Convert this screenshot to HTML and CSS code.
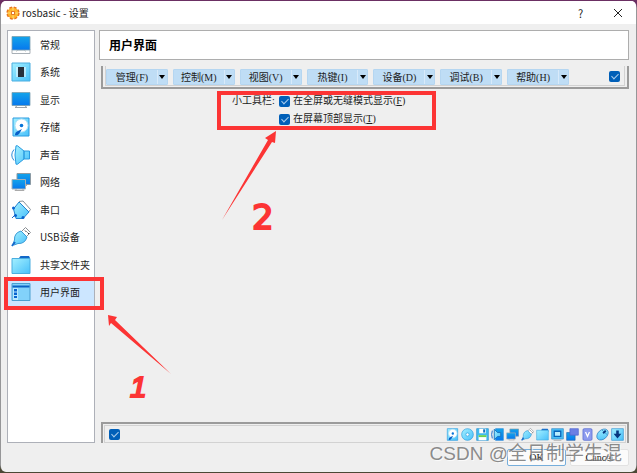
FILE: index.html
```html
<!DOCTYPE html>
<html lang="zh-CN">
<head>
    <meta charset="UTF-8">
    <meta name="viewport" content="width=device-width, initial-scale=1.0">
    <title>rosbasic - 设置</title>
    <link rel="stylesheet" href="styles.css">
</head>
<body>
    <!-- Shared icons -->
    <svg class="icon-defs" aria-hidden="true">
        <defs>
            <linearGradient id="blue" x1="0" y1="0" x2="0" y2="1">
                <stop offset="0" stop-color="#14a4ea"/>
                <stop offset="1" stop-color="#0678ee"/>
            </linearGradient>
            <linearGradient id="cyan" x1="0" y1="0" x2="1" y2="1">
                <stop offset="0" stop-color="#a4f0ff"/>
                <stop offset="1" stop-color="#48c0fa"/>
            </linearGradient>
            <symbol id="i-general" viewBox="0 0 20 20">
                <path d="M1 14.500h18v4H1z" fill="#fff" stroke="#a9b0b6"/>
                <path d="M5 16.500l2-1.500h6l2 1.500" fill="#fff" stroke="#ccc"/>
                <path d="M1 1.500h18V15H1z" fill="url(#blue)" stroke="#7c9fae" stroke-width=".8"/>
            </symbol>
            <symbol id="i-system" viewBox="0 0 20 20">
                <path d="M1 1h18v18H1z" fill="url(#cyan)" stroke="#4aaee0"/>
                <path d="M5 6h2M5 8h2M5 10h2M5 12h2M5 14h2M13 6h2M13 8h2M13 10h2M13 12h2M13 14h2" stroke="#fff"/>
                <path d="M7 5h6v10H7z" fill="#27303c"/>
            </symbol>
            <symbol id="i-display" viewBox="0 0 20 20">
                <path d="M4 17.500l3-2.500h6l3 2.500z" fill="#fff" stroke="#9ba3aa"/>
                <path d="M1 2.500h18v13H1z" fill="url(#blue)" stroke="#7c9fae" stroke-width=".8"/>
            </symbol>
            <symbol id="i-storage" viewBox="0 0 20 20">
                <path d="M2 1h16v18H2z" fill="url(#cyan)" stroke="#2b9be0"/>
                <circle cx="10.500" cy="8.500" r="6.500" fill="#fff" stroke="#b4e3f8"/>
                <circle cx="10.500" cy="8.500" r="1.800" fill="#0874d8"/>
                <path d="M11 12l-3 5q-2 2-4 1 0-3 3-4z" fill="#075fc8"/>
            </symbol>
            <symbol id="i-audio" viewBox="0 0 20 20">
                <path d="M3 4.500q-4.500 5.500 0 11" fill="none" stroke="#2b8bd8"/>
                <path d="M5 .8h1.500L13 6v8l-6.500 5.200H5q-2-9.200 0-18.400zM13 6h5.500v8H13z" fill="url(#cyan)" stroke="#2b9be0"/>
            </symbol>
            <symbol id="i-sound" viewBox="0 0 20 20">
                <path d="M7 1h12v18H7z" fill="url(#blue)" stroke="#2b8bd8"/>
                <path d="M2 4q-2 6 0 12" fill="none" stroke="#1669cc" stroke-width="1.500"/>
                <path d="M5 2l5 5h5v6h-5l-5 5z" fill="url(#cyan)" stroke="#1c73bd" stroke-width="1.500"/>
            </symbol>
            <symbol id="i-network" viewBox="0 0 20 20">
                <path d="M10 13.500h6" stroke="#aaa"/>
                <path d="M6 1.500h13.500v11H6z" fill="url(#blue)" stroke="#8c9aa3"/>
                <path d="M4 18.500h9l-2-2H6z" fill="#fff" stroke="#aaa"/>
                <path d="M1 7.500h13.500v9.500H1z" fill="url(#blue)" stroke="#a6b2b8"/>
            </symbol>
            <symbol id="i-serial" viewBox="0 0 20 20">
                <path d="M8 1.500l4-.5 7.500 8.500-3 4" fill="#fff" stroke="#8a929a"/>
                <path d="M8 2l10 10-6 6.500H5L2.500 9z" fill="url(#cyan)" stroke="#2583cf"/>
                <path d="M10 4l8 8" stroke="#2583cf"/>
                <path d="M4 15l-3 3" stroke="#1669cc"/>
                <circle cx="2.500" cy="8" r="1.500" fill="#0864cf"/>
                <circle cx="4.500" cy="15.500" r="1.500" fill="#0864cf"/>
                <circle cx="12" cy="17.500" r="1.500" fill="#0864cf"/>
            </symbol>
            <symbol id="i-usb" viewBox="0 0 20 20">
                <path d="M10 5l4.500-4.500 5 5L15 10z" fill="#fff" stroke="#8a8f94"/>
                <path d="M14 3.500l1.500 1.500M16.500 5.500L18 7" stroke="#333"/>
                <path d="M10 4l6 6q-2 7-9 6.500L3 18l-1-1 1.500-4Q3 6 10 4z" fill="url(#cyan)" stroke="#399ad6"/>
                <path d="M1 19l3-4" stroke="#1669cc" stroke-width="2"/>
            </symbol>
            <symbol id="i-folder" viewBox="0 0 20 20">
                <path d="M8 3l1.500-2H18l1 2v3H8z" fill="#1268c8"/>
                <path d="M1 3.500h18v15H1z" fill="url(#cyan)" stroke="#4aaee0"/>
            </symbol>
            <symbol id="i-interface" viewBox="0 0 20 20">
                <path d="M1 1.500h18v17H1z" fill="#82d2fa" stroke="#4b9fd0"/>
                <path d="M1.500 4.500h17" stroke="#0b62c4" stroke-width="2"/>
                <path d="M2 6h5v12H2z" fill="#b8e9ff"/>
                <path d="M3 7h3v2.500H3zM3 10.500h3V13H3zM3 14h3v2H3z" fill="#0864cf"/>
            </symbol>
            <symbol id="i-disc" viewBox="0 0 20 20">
                <circle cx="10" cy="10" r="9" fill="url(#cyan)" stroke="#249ade"/>
                <circle cx="10" cy="10" r="2.500" fill="#fff" stroke="#249ade"/>
            </symbol>
            <symbol id="i-floppy" viewBox="0 0 20 20">
                <path d="M1 1h18v18H1z" fill="#41baf1" stroke="#238dcb"/>
                <path d="M5 1h10v7H5zM4 11h12v8H4z" fill="#fff"/>
                <path d="M4 11h12v3H4z" fill="#69cf54"/>
                <path d="M11 2h3v5h-3z" fill="#1670bd"/>
            </symbol>
            <symbol id="i-capture" viewBox="0 0 20 20">
                <path d="M1 1h18v16H1z" fill="#48bdf6" stroke="#2b87c4"/>
                <path d="M5 5h10v8H5z" fill="#b9edff" stroke="#0763b8" stroke-width="2"/>
                <path d="M4 19h12" stroke="#999"/>
            </symbol>
            <symbol id="i-record" viewBox="0 0 20 20">
                <path d="M1 7h13v12H1z" fill="url(#blue)" stroke="#2565aa"/>
                <path d="M6 1h13v10H6z" fill="#6b7fe4" stroke="#4c61ce"/>
            </symbol>
            <symbol id="i-feature" viewBox="0 0 20 20">
                <rect x="3" y="1" width="14" height="18" rx="2" fill="#8d9bee" stroke="#4c61ce"/>
                <path d="M7 6l3 7 3-7" fill="none" stroke="#fff" stroke-width="2"/>
            </symbol>
            <symbol id="i-mouse" viewBox="0 0 20 20">
                <ellipse cx="10" cy="10" rx="7" ry="10" transform="rotate(48 10 10)" fill="url(#cyan)" stroke="#2375bd"/>
                <path d="M9 3l8 7" stroke="#2375bd"/>
                <path d="M11 8l4-4" stroke="#07377f" stroke-width="3"/>
            </symbol>
            <symbol id="i-keyboard" viewBox="0 0 20 20">
                <path d="M1 1h18v18H1z" fill="url(#cyan)" stroke="#2b91d0"/>
                <path d="M8 4h4v5h4l-6 7-6-7h4z" fill="#07377f"/>
            </symbol>
        </defs>
    </svg>

    <div class="window">
        <header class="titlebar">
            <svg class="app-icon" viewBox="0 0 20 20" aria-hidden="true">
                <circle cx="10" cy="10" r="8" fill="#f8a51b" stroke="#e8761f" stroke-width="3" stroke-dasharray="4 2.300"/>
                <circle cx="10" cy="10" r="7.500" fill="#ffb52a"/>
                <circle cx="10" cy="10" r="2.500" fill="#fff" stroke="#e06c1a" stroke-width="1.500"/>
                <path d="M10 3v4M10 13v4M3 10h4M13 10h4" stroke="#fff0a0"/>
            </svg>
            <span class="title">rosbasic - 设置</span>
            <button class="title-btn" type="button">?</button>
            <button class="title-btn" type="button" aria-label="关闭">
                <svg class="close-icon" viewBox="0 0 10 10"><path d="M1 1l8 8M9 1L1 9" stroke="#222" fill="none"/></svg>
            </button>
        </header>

        <div class="content">
            <!-- Categories -->
            <nav class="sidebar">
                <ul class="categories">
                    <li><a class="category" href="#"><svg class="icon"><use href="#i-general"/></svg>常规</a></li>
                    <li><a class="category" href="#"><svg class="icon"><use href="#i-system"/></svg>系统</a></li>
                    <li><a class="category" href="#"><svg class="icon"><use href="#i-display"/></svg>显示</a></li>
                    <li><a class="category" href="#"><svg class="icon"><use href="#i-storage"/></svg>存储</a></li>
                    <li><a class="category" href="#"><svg class="icon"><use href="#i-audio"/></svg>声音</a></li>
                    <li><a class="category" href="#"><svg class="icon"><use href="#i-network"/></svg>网络</a></li>
                    <li><a class="category" href="#"><svg class="icon"><use href="#i-serial"/></svg>串口</a></li>
                    <li><a class="category" href="#"><svg class="icon"><use href="#i-usb"/></svg>USB设备</a></li>
                    <li><a class="category" href="#"><svg class="icon"><use href="#i-folder"/></svg>共享文件夹</a></li>
                    <li><a class="category selected" href="#"><svg class="icon"><use href="#i-interface"/></svg>用户界面</a></li>
                </ul>
            </nav>

            <main class="page">
                <h1 class="page-title">用户界面</h1>

                <!-- Menu bar editor -->
                <div class="menubar">
                    <div class="menubar-inner">
                        <div class="menus">
                            <button class="menu" type="button"><span class="menu-label">管理(F)</span><span class="arrow"></span></button>
                            <button class="menu" type="button"><span class="menu-label">控制(M)</span><span class="arrow"></span></button>
                            <button class="menu" type="button"><span class="menu-label">视图(V)</span><span class="arrow"></span></button>
                            <button class="menu" type="button"><span class="menu-label">热键(I)</span><span class="arrow"></span></button>
                            <button class="menu" type="button"><span class="menu-label">设备(D)</span><span class="arrow"></span></button>
                            <button class="menu" type="button"><span class="menu-label">调试(B)</span><span class="arrow"></span></button>
                            <button class="menu" type="button"><span class="menu-label">帮助(H)</span><span class="arrow"></span></button>
                        </div>
                        <input class="check" type="checkbox" aria-label="启用菜单栏" checked>
                    </div>
                </div>

                <div class="options">
                    <span class="options-label">小工具栏:</span>
                    <label class="option"><input class="check" type="checkbox" checked><span>在全屏或无缝模式显示(<u>F</u>)</span></label>
                    <label class="option second"><input class="check" type="checkbox" checked><span>在屏幕顶部显示(<u>T</u>)</span></label>
                </div>

                <!-- Status bar editor -->
                <div class="statusbar">
                    <div class="statusbar-inner">
                        <input class="check" type="checkbox" aria-label="启用状态栏" checked>
                        <div class="indicators">
                            <svg class="small-icon"><use href="#i-storage"/></svg>
                            <svg class="small-icon"><use href="#i-disc"/></svg>
                            <svg class="small-icon"><use href="#i-floppy"/></svg>
                            <svg class="small-icon"><use href="#i-sound"/></svg>
                            <svg class="small-icon"><use href="#i-network"/></svg>
                            <svg class="small-icon"><use href="#i-usb"/></svg>
                            <svg class="small-icon"><use href="#i-folder"/></svg>
                            <svg class="small-icon"><use href="#i-capture"/></svg>
                            <svg class="small-icon"><use href="#i-record"/></svg>
                            <svg class="small-icon"><use href="#i-feature"/></svg>
                            <svg class="small-icon"><use href="#i-mouse"/></svg>
                            <svg class="small-icon"><use href="#i-keyboard"/></svg>
                        </div>
                    </div>
                </div>
            </main>
        </div>

        <footer class="footer">
            <button class="dialog-btn default" type="button">OK</button>
            <button class="dialog-btn" type="button">Cancel</button>
            <span class="watermark">CSDN @全日制学生混</span>
        </footer>
    </div>

    <!-- Arrows and step numbers -->
    <svg class="marks" viewBox="0 0 637 473" aria-hidden="true">
        <path d="M108 315l9 2-2 3 56 54-60-51-2 3z" fill="#fc3434"/>
        <path d="M276 131l-1 12-3-1-50 78 46-80-3-2z" fill="#fc3434"/>
    </svg>
    <span class="step step-one">1</span>
    <span class="step step-two">2</span>
</body>
</html>
```
FILE: styles.css
```css
* {
    box-sizing: border-box;
}
body {
    margin: 0;
    padding: 1px;
    height: 100vh;
    position: relative;
    overflow: hidden;
    display: flex;
    background: linear-gradient(#6b2f63 0, #6b2f63 4px, #969698 8px, #969698 calc(100% - 8px), #4b4835 calc(100% - 4px));
    font-family: "Noto Sans CJK SC", sans-serif;
    font-size: 10px;
    line-height: 14px;
    color: #1c1c1c;
}
button {
    margin: 0;
    padding: 0;
    border: 0;
    background: none;
    font: inherit;
    color: inherit;
}
.icon-defs {
    position: absolute;
    width: 0;
    height: 0;
}
.window {
    flex: 1;
    display: flex;
    flex-direction: column;
    background: #efefef;
    border-radius: 5px;
    overflow: hidden;
}
.titlebar {
    height: 23px;
    display: flex;
    align-items: center;
    padding: 0 7px 0 5px;
    background: #fff;
}
.app-icon {
    width: 14px;
    height: 14px;
    margin-right: 2px;
}
.title {
    flex: 1;
}
.title-btn {
    width: 23px;
    height: 20px;
    margin-left: 14px;
    font-size: 11px;
}
.close-icon {
    width: 10px;
    height: 10px;
    vertical-align: top;
    margin-top: 2px;
}
.content {
    flex: 1;
    display: flex;
    gap: 4px;
    padding: 6px 7px 0 6px;
}

/* Sidebar */
.sidebar {
    width: 88px;
    background: #fff;
    border: 1px solid #adb0b8;
}
.categories {
    height: 275px;
    margin: 0;
    padding: 0;
    list-style: none;
    display: grid;
    grid-template-rows: repeat(10, 1fr);
}
.category {
    position: relative;
    height: 100%;
    display: flex;
    align-items: center;
    gap: 9px;
    padding-left: 3px;
    color: inherit;
    text-decoration: none;
    white-space: nowrap;
}
.selected {
    background: #cce6ff;
}
.selected::after,
.options::after {
    content: "";
    position: absolute;
    border: 4px solid #fc3434;
}
.selected::after {
    inset: -2px -10px -4px -4px;
}
.icon {
    width: 20px;
    height: 20px;
}

/* Settings page */
.page {
    flex: 1;
    display: flex;
    flex-direction: column;
}
.page-title {
    margin: 0 0 6px;
    padding: 0 9px;
    border: 1px solid #adadad;
    background: #fff;
    font-size: 12px;
    line-height: 28px;
    color: #000;
}
.menubar {
    margin-left: 2px;
    padding: 0 2px 1px;
    border: 2px solid #9b9b9b;
    border-top: 0;
    font-family: "Liberation Serif", "Noto Sans CJK SC", serif;
}
.menubar-inner {
    height: 20px;
    display: flex;
    align-items: center;
    justify-content: space-between;
    padding: 2px 4px 0 0;
    border: 1px solid #d2d2d2;
    border-top: 0;
}
.menus {
    width: 463px;
    display: grid;
    grid-template-columns: repeat(7, 1fr);
    gap: 5px;
}
.menu {
    height: 16px;
    display: flex;
    background: #bfddf5;
    border: 1px solid #b5d6f1;
    border-radius: 1px;
}
.menu-label {
    flex: 1;
    line-height: 16px;
}
.arrow {
    width: 10px;
    height: 14px;
    border-left: 1px solid #d8eafa;
    display: flex;
    align-items: center;
    justify-content: center;
}
.arrow::before {
    content: "";
    border: 3px solid transparent;
    border-top: 4px solid #000;
    border-bottom: 0;
}
.check {
    appearance: none;
    flex: none;
    width: 11px;
    height: 11px;
    margin: 0;
    display: flex;
    justify-content: center;
    background: #005fb8;
    border-radius: 2px;
}
.check:checked::before {
    content: "";
    width: 3px;
    height: 6px;
    margin-top: 1px;
    border: solid #a9cdec;
    border-width: 0 1px 1px 0;
    transform: rotate(45deg);
}
.options {
    position: relative;
    width: 219px;
    margin: 2px 0 0 118px;
    padding: 1px 0 2px 15px;
    display: grid;
    grid-template-columns: 43px 1fr;
    column-gap: 4px;
    font-family: "Liberation Serif", "Noto Sans CJK SC", serif;
    line-height: 18px;
    white-space: nowrap;
}
.options::after {
    inset: 0;
}
.option {
    display: flex;
    align-items: center;
    gap: 3px;
}
.second {
    grid-column: 2;
}

/* Bottom indicators */
.statusbar {
    margin: auto 0 0 2px;
    padding: 1px 1px 0;
    border: 2px solid #9b9b9b;
    border-bottom: 0;
}
.statusbar-inner {
    height: 18px;
    display: flex;
    align-items: center;
    justify-content: space-between;
    padding: 0 1px 0 4px;
    border: 1px solid #d2d2d2;
}
.indicators {
    display: flex;
    gap: 2px;
}
.small-icon {
    width: 13px;
    height: 13px;
}
.footer {
    position: relative;
    display: flex;
    justify-content: flex-end;
    gap: 4px;
    padding: 6px 7px;
    font-family: "Liberation Serif", serif;
}
.dialog-btn {
    width: 59px;
    height: 17px;
    background: #fbfbfb;
    border: 1px solid #e2e2e2;
    border-radius: 2px;
}
.default {
    border-color: #76aedb;
}
.watermark {
    position: absolute;
    top: 0;
    right: 14px;
    font-family: "Liberation Sans", "Noto Sans CJK SC", sans-serif;
    font-size: 19px;
    line-height: 22px;
    color: rgba(110, 110, 110, 0.8);
    text-shadow: 1px 1px 0 rgba(255, 255, 255, 0.7);
    white-space: nowrap;
    pointer-events: none;
}

/* Red notes */
.marks {
    position: absolute;
    top: 0;
    left: 0;
    width: 637px;
    height: 473px;
    pointer-events: none;
}
.step {
    position: absolute;
    font-family: "Liberation Sans", sans-serif;
    line-height: 32px;
    color: #fc3434;
    -webkit-text-stroke: 2px #fc3434;
}
.step-one {
    top: 371px;
    left: 130px;
    font-style: italic;
    font-size: 30px;
}
.step-two {
    top: 201px;
    left: 252px;
    font-family: "DejaVu Sans", sans-serif;
    font-size: 34px;
}
```
